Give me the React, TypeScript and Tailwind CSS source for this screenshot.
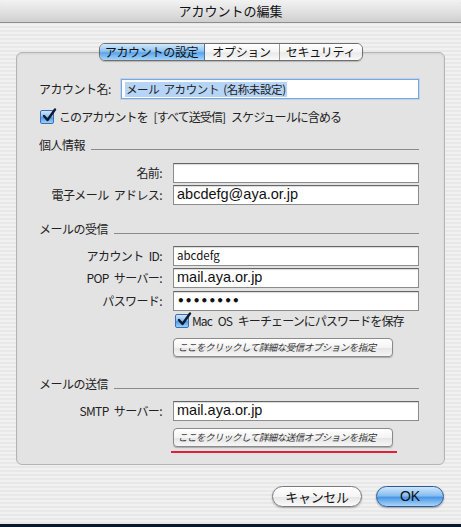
import React from 'react'

const jp = "font-['Noto_Sans_CJK_JP',sans-serif]"

function Check() {
  return (
    <span className="relative inline-block w-[14px] h-[14px] shrink-0 rounded-[2px] border border-[#3d6fae] bg-[linear-gradient(180deg,#cfe5fb_0%,#8fc2f1_45%,#4f9be6_55%,#9fd0f8_100%)]">
      <svg className="absolute left-[1px] top-[-3px]" width="15" height="15" viewBox="0 0 15 15">
        <path d="M2 8 L5.5 12 L13 1.5" fill="none" stroke="#0d1c33" strokeWidth="2.4" strokeLinecap="round" strokeLinejoin="round" />
      </svg>
    </span>
  )
}

function Field({ children, className = '' }: { children?: React.ReactNode; className?: string }) {
  return (
    <div className={`h-[20px] w-[246px] bg-white border border-[#8c8c8c] border-t-[#666] shadow-[inset_0_1px_1px_rgba(0,0,0,0.15)] flex items-center px-[3px] ${className}`}>
      {children}
    </div>
  )
}

function Row({ label, children, className = '' }: { label: string; children: React.ReactNode; className?: string }) {
  return (
    <div className={`flex items-center ${className}`}>
      <div className="w-[134px] pr-[11px] text-right text-[12px] tracking-[-0.6px] [word-spacing:3px] text-[#222]">{label}</div>
      {children}
    </div>
  )
}

function Heading({ text, className = '' }: { text: string; className?: string }) {
  return (
    <div className={`flex items-end h-[16px] pr-[25px] ${className}`}>
      <span className="text-[12px] leading-[16px] tracking-[-0.5px] text-[#222]">{text}</span>
      <div className="flex-1 h-px bg-[#8a8a8a] ml-[6px] mb-[3px]" />
    </div>
  )
}

function OptButton({ text }: { text: string }) {
  return (
    <div className="ml-[134px] h-[19px] w-[220px] rounded-[4px] border border-[#8a8a8a] bg-[linear-gradient(180deg,#ffffff_0%,#f4f4f4_50%,#e6e6e6_55%,#f6f6f6_100%)] shadow-[0_1px_1px_rgba(0,0,0,0.25)] flex items-center pl-[4px] text-[9.5px] italic text-[#333] tracking-[-0.5px]">
      {text}
    </div>
  )
}

export default function App() {
  return (
    <div className={`w-[461px] h-[527px] overflow-hidden flex flex-col ${jp} bg-[repeating-linear-gradient(180deg,#f1f1f1_0px,#f1f1f1_2px,#e8e8e8_2px,#e8e8e8_4px)]`}>
      {/* title bar */}
      <div className="h-[23px] shrink-0 border-b border-[#8e8e8e] rounded-t-[6px] bg-[linear-gradient(180deg,#f2f2f2_0%,#e2e2e2_50%,#cfcfcf_100%)] flex items-center justify-center text-[13px] text-[#111]">
        アカウントの編集
      </div>

      {/* tabs */}
      <div className="mt-[20px] flex justify-center relative z-10">
        <div className="flex h-[18px] rounded-[6px] border border-[#6e6e6e] overflow-hidden shadow-[0_1px_1px_rgba(0,0,0,0.2)] text-[12px] leading-[16px] tracking-[-0.3px]">
          <div className="w-[105px] flex items-center justify-center text-[#111] bg-[linear-gradient(180deg,#d2e8fb_0%,#8ec3f1_45%,#5ba4ea_55%,#a5d4f9_100%)] border-r border-[#4a76ad]">アカウントの設定</div>
          <div className="w-[75px] flex items-center justify-center text-[#111] bg-[linear-gradient(180deg,#ffffff_0%,#f5f5f5_50%,#e9e9e9_55%,#fafafa_100%)] border-r border-[#9a9a9a]">オプション</div>
          <div className="w-[82px] flex items-center justify-center text-[#111] bg-[linear-gradient(180deg,#ffffff_0%,#f5f5f5_50%,#e9e9e9_55%,#fafafa_100%)]">セキュリティ</div>
        </div>
      </div>

      {/* panel */}
      <div className="mx-[16px] -mt-[9px] h-[413px] rounded-[6px] border border-[#b4b4b4] bg-[#e3e3e3] shadow-[inset_0_1px_2px_rgba(0,0,0,0.08)] pt-[26px] pl-[22px] text-[#222]">
        <div className="flex items-center h-[20px]">
          <span className="w-[82px] text-[12px] tracking-[-0.5px]">アカウント名:</span>
          <div className="h-[20px] w-[298px] bg-white border border-[#7fa6d6] shadow-[0_0_0_1px_#b9d4f1] flex items-center px-[3px]">
            <span className="bg-[#b6d5f6] text-[11.5px] leading-[15px] px-[1px] tracking-[-0.4px] [word-spacing:2px]">メール アカウント (名称未設定)</span>
          </div>
        </div>

        <div className="mt-[11px] flex items-center h-[14px] gap-[5px] pl-[1px]">
          <Check />
          <span className="text-[12px] tracking-[-0.9px] [word-spacing:4px]">このアカウントを [すべて送受信] スケジュールに含める</span>
        </div>

        <Heading text="個人情報" className="mt-[13px]" />

        <Row label="名前:" className="mt-[10px]">
          <Field />
        </Row>
        <Row label="電子メール アドレス:" className="mt-[2px]">
          <Field>
            <span className="font-['Liberation_Sans',sans-serif] text-[14.5px] text-[#111]">abcdefg@aya.or.jp</span>
          </Field>
        </Row>

        <Heading text="メールの受信" className="mt-[16px]" />

        <Row label="アカウント ID:" className="mt-[9px]">
          <Field>
            <span className="text-[11.5px] text-[#111]">abcdefg</span>
          </Field>
        </Row>
        <Row label="POP サーバー:" className="mt-[2px]">
          <Field>
            <span className="font-['Liberation_Sans',sans-serif] text-[14.5px] text-[#111]">mail.aya.or.jp</span>
          </Field>
        </Row>
        <Row label="パスワード:" className="mt-[3px]">
          <Field>
            <span className="font-['DejaVu_Sans',sans-serif] text-[12px] font-bold tracking-[0.2px] text-[#111]">••••••••</span>
          </Field>
        </Row>

        <div className="mt-[3px] ml-[136px] flex items-center h-[14px] gap-[3px]">
          <Check />
          <span className="text-[12px] tracking-[-0.9px] [word-spacing:4px]">Mac OS キーチェーンにパスワードを保存</span>
        </div>

        <div className="mt-[10px]">
          <OptButton text="ここをクリックして詳細な受信オプションを指定" />
        </div>

        <Heading text="メールの送信" className="mt-[19px]" />

        <Row label="SMTP サーバー:" className="mt-[9px]">
          <Field>
            <span className="font-['Liberation_Sans',sans-serif] text-[14.5px] text-[#111]">mail.aya.or.jp</span>
          </Field>
        </Row>

        <div className="mt-[7px]">
          <OptButton text="ここをクリックして詳細な送信オプションを指定" />
        </div>
        <div className="mt-[4px] ml-[132px] w-[226px] h-[2px] bg-[#e0203a]" />
      </div>

      {/* buttons */}
      <div className="mt-[21px] flex justify-end gap-[14px] pr-[17px]">
        <div className="w-[90px] h-[21px] rounded-full border border-[#7b7b7b] bg-[linear-gradient(180deg,#ffffff_0%,#f5f5f5_50%,#e6e6e6_55%,#fbfbfb_100%)] shadow-[0_1px_2px_rgba(0,0,0,0.3)] flex items-center justify-center text-[13px] tracking-[-0.3px] text-[#111]">
          キャンセル
        </div>
        <div className="w-[68px] h-[21px] rounded-full border border-[#2c5a98] bg-[linear-gradient(180deg,#cfe6fb_0%,#86bef0_45%,#4b97e6_55%,#a9d6fa_100%)] shadow-[0_1px_2px_rgba(0,0,0,0.35)] flex items-center justify-center font-['Liberation_Sans',sans-serif] text-[14px] text-[#111]">
          OK
        </div>
      </div>

      <div className="mt-auto h-[3px] bg-[#0b1a2b]" />
    </div>
  )
}
